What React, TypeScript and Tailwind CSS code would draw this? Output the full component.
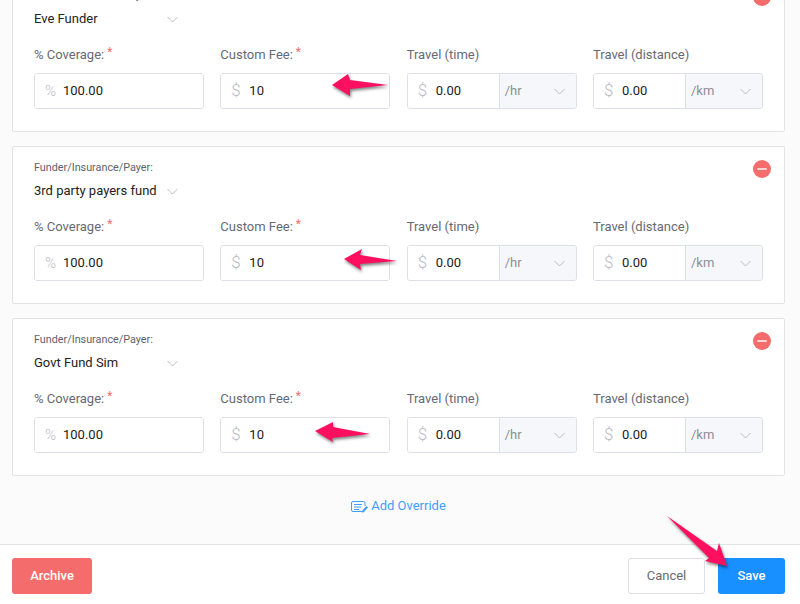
const font = { fontFamily: 'Roboto, "Liberation Sans", Arial, sans-serif' };

function Chevron({ className }: { className: string }) {
  return (
    <svg className={className} width="11" height="7" viewBox="0 0 11 7" fill="none" stroke="currentColor" strokeWidth="1">
      <path d="M0.5 1 L5.5 6 L10.5 1" />
    </svg>
  );
}

function Label({ text, required }: { text: string; required?: boolean }) {
  return (
    <div className="h-[19px] text-[13px] leading-[19px] text-[#666a73] whitespace-nowrap">
      {text}
      {required && <span className="relative -top-[3px] ml-[3px] text-[12px] text-[#f56c6c]">*</span>}
    </div>
  );
}

function PrefixField({ prefix, value }: { prefix: string; value: string }) {
  return (
    <div className="flex h-[34px] min-w-0 flex-1 items-center bg-white pl-[10px] text-[13px]">
      <span className={`${prefix === "%" ? "w-[18px] text-[15px]" : "w-[18px] text-[17px]"} font-light text-[#b9bcc6]`}>{prefix}</span>
      <span className="text-[#222]">{value}</span>
    </div>
  );
}

function Field({ label, required, prefix, value, unit }: { label: string; required?: boolean; prefix: string; value: string; unit?: string }) {
  return (
    <div className="min-w-0">
      <Label text={label} required={required} />
      <div className="mt-[9px] flex h-[36px] overflow-hidden rounded-[3px] border border-[#dcdfe6] bg-white">
        <PrefixField prefix={prefix} value={value} />
        {unit && (
          <div className="flex w-[77px] shrink-0 items-center justify-between border-l border-[#dcdfe6] bg-[#f5f7fa] pl-[5px] pr-[11px] text-[13px] text-[#8c8f96]">
            <span>{unit}</span>
            <Chevron className="text-[#b9bcc3]" />
          </div>
        )}
      </div>
    </div>
  );
}

function Card({ name }: { name: string }) {
  return (
    <div className="relative h-[158px] rounded-[2px] border border-[#e2e3e6] bg-white px-[21px] pt-[14px]">
      <div className="absolute right-[13px] top-[13px] flex h-[18px] w-[18px] items-center justify-center rounded-full bg-[#f56c6c]">
        <div className="h-[2px] w-[10px] rounded-full bg-[#fbd3d3]" />
      </div>
      <div className="text-[10.8px] leading-[13px] text-[#5f6269]">Funder/Insurance/Payer:</div>
      <div className="mt-[8px] flex h-[18px] items-center text-[13px] leading-[18px] text-[#222]">
        <span className="w-[133px] whitespace-nowrap">{name}</span>
        <Chevron className="mt-[1px] text-[#b9bcc3]" />
      </div>
      <div className="mt-[17px] grid grid-cols-[repeat(4,170px)] gap-x-[16.33px]">
        <Field label="% Coverage:" required prefix="%" value="100.00" />
        <Field label="Custom Fee:" required prefix="$" value="10" />
        <Field label="Travel (time)" prefix="$" value="0.00" unit="/hr" />
        <Field label="Travel (distance)" prefix="$" value="0.00" unit="/km" />
      </div>
    </div>
  );
}

function Arrow({ points }: { points: string }) {
  return (
    <polygon points={points} fill="#ff0f5f" style={{ filter: "drop-shadow(1px 2px 1.5px rgba(0,0,0,0.5))" }} />
  );
}

export default function App() {
  return (
    <div className="relative flex h-[604px] w-[800px] flex-col overflow-hidden bg-white" style={font}>
      <main className="flex-1 overflow-hidden border-b border-[#e3e3e3] bg-[#fbfbfb] px-3">
        <div className="-mt-[26px] flex w-[773px] flex-col gap-[14px]">
          <Card name="Eve Funder" />
          <Card name="3rd party payers fund" />
          <Card name="Govt Fund Sim" />
        </div>
        <div className="mt-[21px] flex w-[773px] items-center justify-center text-[13px] leading-[18px] text-[#409eff]">
          <svg className="mr-[3px]" width="17" height="13" viewBox="0 0 17 13" fill="none" stroke="currentColor" strokeWidth="1">
            <path d="M11 11.5 H2 A1.5 1.5 0 0 1 0.5 10 V3 A1.5 1.5 0 0 1 2 1.5 H12.5 A1.5 1.5 0 0 1 14 3 V6" />
            <path d="M3 4.5 H11 M3 7 H10 M3 9.5 H8" />
            <path d="M11.5 11 L15.5 6.5 L16.5 7.5 L12.5 12 L11 12 Z" fill="currentColor" />
          </svg>
          Add Override
        </div>
      </main>
      <footer className="flex h-[59px] shrink-0 items-start justify-between bg-white px-3 pt-[13px]">
        <button className="h-[36px] w-[80px] rounded-[3px] bg-[#f56c6c] text-[13px] font-medium text-white">Archive</button>
        <div className="mr-[3px] flex gap-[13px]">
          <button className="h-[36px] w-[77px] rounded-[3px] border border-[#dcdfe6] bg-white text-[13px] text-[#666a73]">Cancel</button>
          <button className="h-[36px] w-[67px] rounded-[3px] bg-[#1890ff] text-[13px] font-medium text-white">Save</button>
        </div>
      </footer>
      <svg className="pointer-events-none absolute left-0 top-0" width="800" height="604">
        <Arrow points="332,85 348,74 350,80 388,85 350,89 350,96" />
        <Arrow points="344,259 362,249 360,255 397,261 360,264 361,270" />
        <Arrow points="315,431 333,422 333,427 370,434 332,438 333,442" />
        <Arrow points="667,516 717,551 719,543 727,566 705,561 709,558" />
      </svg>
    </div>
  );
}
